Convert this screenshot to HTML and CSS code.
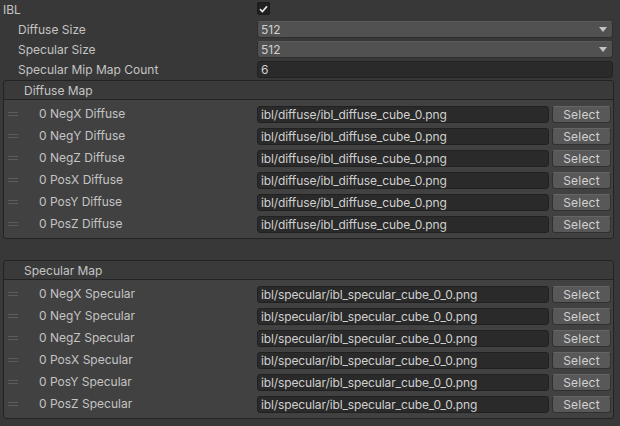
FILE: index.html
```html
<!DOCTYPE html>
<html>
<head>
<meta charset="utf-8">
<link rel="stylesheet" href="styles.css">
</head>
<body>
<div class="inspector">
  <div class="prop">
    <div class="label l0">IBL</div>
    <div class="value"><div class="checkbox"><svg width="9" height="8" viewBox="0 0 9 8"><path d="M1 4.2 L3.4 6.5 L8 1.4" fill="none" stroke="#e6e6e6" stroke-width="1.6"/></svg></div></div>
  </div>
  <div class="prop">
    <div class="label l1">Diffuse Size</div>
    <div class="value"><div class="dropdown"><span>512</span><i class="arrow"></i></div></div>
  </div>
  <div class="prop">
    <div class="label l1">Specular Size</div>
    <div class="value"><div class="dropdown"><span>512</span><i class="arrow"></i></div></div>
  </div>
  <div class="prop">
    <div class="label l1">Specular Mip Map Count</div>
    <div class="value"><div class="textfield">6</div></div>
  </div>

  <div class="list">
    <div class="list-header">Diffuse Map</div>
    <div class="list-body">
      <div class="item"><span class="handle"></span><span class="item-label">0 NegX Diffuse</span><div class="path">ibl/diffuse/ibl_diffuse_cube_0.png</div><div class="btn">Select</div></div>
      <div class="item"><span class="handle"></span><span class="item-label">0 NegY Diffuse</span><div class="path">ibl/diffuse/ibl_diffuse_cube_0.png</div><div class="btn">Select</div></div>
      <div class="item"><span class="handle"></span><span class="item-label">0 NegZ Diffuse</span><div class="path">ibl/diffuse/ibl_diffuse_cube_0.png</div><div class="btn">Select</div></div>
      <div class="item"><span class="handle"></span><span class="item-label">0 PosX Diffuse</span><div class="path">ibl/diffuse/ibl_diffuse_cube_0.png</div><div class="btn">Select</div></div>
      <div class="item"><span class="handle"></span><span class="item-label">0 PosY Diffuse</span><div class="path">ibl/diffuse/ibl_diffuse_cube_0.png</div><div class="btn">Select</div></div>
      <div class="item"><span class="handle"></span><span class="item-label">0 PosZ Diffuse</span><div class="path">ibl/diffuse/ibl_diffuse_cube_0.png</div><div class="btn">Select</div></div>
    </div>
  </div>

  <div class="list second">
    <div class="list-header">Specular Map</div>
    <div class="list-body">
      <div class="item"><span class="handle"></span><span class="item-label">0 NegX Specular</span><div class="path">ibl/specular/ibl_specular_cube_0_0.png</div><div class="btn">Select</div></div>
      <div class="item"><span class="handle"></span><span class="item-label">0 NegY Specular</span><div class="path">ibl/specular/ibl_specular_cube_0_0.png</div><div class="btn">Select</div></div>
      <div class="item"><span class="handle"></span><span class="item-label">0 NegZ Specular</span><div class="path">ibl/specular/ibl_specular_cube_0_0.png</div><div class="btn">Select</div></div>
      <div class="item"><span class="handle"></span><span class="item-label">0 PosX Specular</span><div class="path">ibl/specular/ibl_specular_cube_0_0.png</div><div class="btn">Select</div></div>
      <div class="item"><span class="handle"></span><span class="item-label">0 PosY Specular</span><div class="path">ibl/specular/ibl_specular_cube_0_0.png</div><div class="btn">Select</div></div>
      <div class="item"><span class="handle"></span><span class="item-label">0 PosZ Specular</span><div class="path">ibl/specular/ibl_specular_cube_0_0.png</div><div class="btn">Select</div></div>
    </div>
  </div>
</div>
</body>
</html>
```

FILE: styles.css
```css
html, body {
  margin: 0;
  padding: 0;
  background: #383838;
}
body {
  font-family: Inter, "Noto Sans", sans-serif;
  font-size: 12px;
  color: #c4c4c4;
  width: 620px;
  height: 426px;
  overflow: hidden;
}
.inspector {
  display: flex;
  flex-direction: column;
}
.prop {
  display: flex;
  height: 20px;
  align-items: flex-start;
}
.label {
  width: 257px;
  box-sizing: border-box;
  height: 19px;
  line-height: 19px;
  white-space: nowrap;
}
.l0 { padding-left: 3px; }
.l1 { padding-left: 18px; }
.value {
  width: 356px;
  padding-top: 1px;
}
.checkbox {
  width: 13px;
  height: 13px;
  box-sizing: border-box;
  margin-top: 1px;
  background: #202020;
  border: 1px solid #1a1a1a;
  border-radius: 2px;
  display: flex;
  align-items: center;
  justify-content: center;
}
.checkbox svg { display: block; }
.dropdown {
  height: 17px;
  box-sizing: border-box;
  background: #515151;
  border: 1px solid #2f2f2f;
  border-top-color: #5a5a5a;
  border-radius: 3px;
  display: flex;
  align-items: center;
  justify-content: space-between;
  padding: 0 5px 0 3px;
  line-height: 15px;
  color: #d0d0d0;
}
.arrow {
  width: 0;
  height: 0;
  border-left: 4px solid transparent;
  border-right: 4px solid transparent;
  border-top: 5px solid #c4c4c4;
}
.textfield {
  height: 17px;
  box-sizing: border-box;
  background: #2a2a2a;
  border: 1px solid #212121;
  border-radius: 3px;
  padding: 0 3px;
  line-height: 15px;
  color: #d0d0d0;
}
.list {
  margin: 0 6px 0 3px;
  border: 1px solid #232323;
  border-radius: 3px;
}
.list.second {
  margin-top: 21px;
}
.list-header {
  height: 18px;
  line-height: 19px;
  padding-left: 20px;
  background: #3a3a3a;
  border-bottom: 1px solid #232323;
  border-radius: 3px 3px 0 0;
}
.list-body {
  background: #414141;
  padding: 4px 0 2px;
  border-radius: 0 0 3px 3px;
}
.item {
  display: flex;
  align-items: flex-start;
  height: 22px;
}
.handle {
  width: 10px;
  height: 4px;
  box-sizing: border-box;
  border-top: 1px solid #5c5c5c;
  border-bottom: 1px solid #5c5c5c;
  margin: 8px 0 0 4px;
  flex: none;
}
.item-label {
  margin-left: 21px;
  width: 218px;
  flex: none;
  white-space: nowrap;
  line-height: 19px;
}
.path {
  width: 292px;
  height: 17px;
  margin-top: 2px;
  box-sizing: border-box;
  flex: none;
  background: #2a2a2a;
  border: 1px solid #212121;
  border-radius: 3px;
  padding: 0 3px;
  line-height: 15px;
  color: #d0d0d0;
  white-space: nowrap;
  letter-spacing: -0.12px;
}
.btn {
  margin: 2px 0 0 3px;
  width: 59px;
  height: 17px;
  box-sizing: border-box;
  flex: none;
  background: #585858;
  border: 1px solid #303030;
  border-top-color: #656565;
  border-radius: 3px;
  text-align: center;
  line-height: 15px;
  color: #d2d2d2;
  letter-spacing: 0.2px;
}
```
